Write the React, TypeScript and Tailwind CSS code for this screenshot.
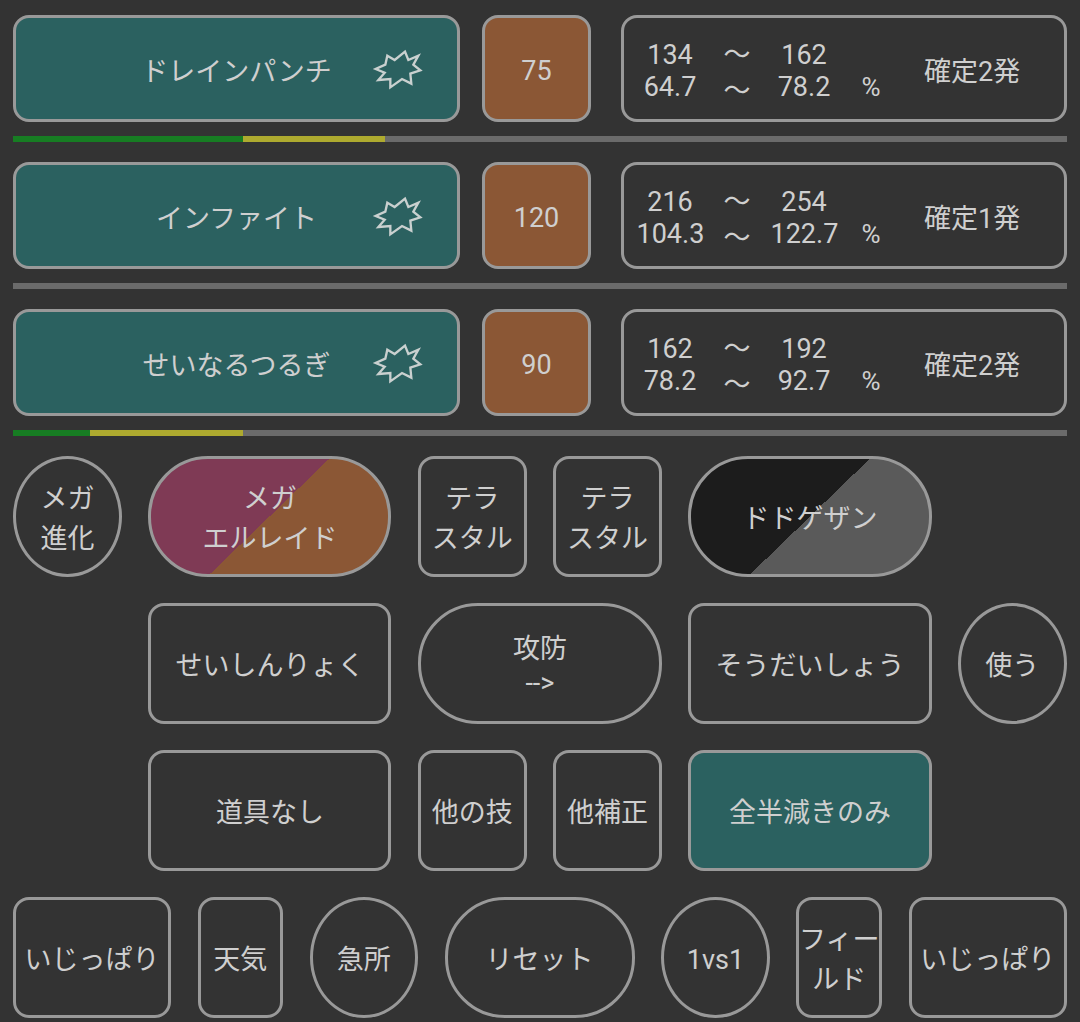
import type { ReactNode } from "react";

const FONT = "font-['Roboto','Noto_Sans_CJK_JP',sans-serif]";

const Burst = () => (
  <svg
    viewBox="0 0 240 210"
    className="absolute left-[344px] top-[17px] h-[70px] w-[80px]"
    fill="none"
    stroke="#c9d0cf"
    strokeWidth="7"
  >
    <path d="M82 62 L104 75 L135 50 L145 75 L175 62 L160 89 L181 106 L151 116 L154 146 L126 132 L91 157 L91 132 L55 135 L74 113 L47 102 L76 89 Z" />
  </svg>
);

const Btn = ({
  w,
  cls = "rounded-[16px]",
  children,
}: {
  w: string;
  cls?: string;
  children: ReactNode;
}) => (
  <div
    className={`relative flex h-[121px] shrink-0 items-center justify-center whitespace-nowrap border-[3px] border-[#999999] pt-[4px] text-center text-[27px] leading-[40px] text-[#cfcfcf] ${w} ${cls}`}
  >
    <div>{children}</div>
  </div>
);

const Move = ({
  name,
  power,
  lo,
  hi,
  loPct,
  hiPct,
  ko,
}: {
  name: string;
  power: string;
  lo: string;
  hi: string;
  loPct: string;
  hiPct: string;
  ko: string;
}) => (
  <div className="flex h-[107px] gap-[22px] text-[27px] text-[#cfcfcf]">
    <div className="relative flex w-[447px] items-center justify-center rounded-[16px] border-[3px] border-[#999999] bg-[#2b6160] pt-[8px]">
      {name}
      <Burst />
    </div>
    <div className="flex w-[109px] items-center justify-center rounded-[16px] border-[3px] border-[#999999] bg-[#8b5735] pt-[6px]">
      {power}
    </div>
    <div className="ml-[8px] flex w-[446px] items-center rounded-[16px] border-[3px] border-[#999999] pl-[12.5px]">
      <div className="grid w-[268px] grid-cols-4 items-center whitespace-nowrap pt-[4px] text-center leading-[32px]">
        <span>{lo}</span>
        <span>〜</span>
        <span>{hi}</span>
        <span />
        <span>{loPct}</span>
        <span className="pt-[8px] leading-[24px]">〜</span>
        <span>{hiPct}</span>
        <span className="text-[26px]">%</span>
      </div>
      <div className="ml-[19.5px] pt-[8px]">{ko}</div>
    </div>
  </div>
);

const Bar = ({ green, yellow }: { green: string; yellow: string }) => (
  <div className="mb-[20px] mt-[14px] flex h-[6px] bg-[#6b6b6b]">
    <div className={`h-full bg-[#177d23] ${green}`} />
    <div className={`h-full bg-[#aeaa2f] ${yellow}`} />
  </div>
);

export default function App() {
  return (
    <div
      className={`h-[1022px] w-[1080px] overflow-hidden bg-[#333333] pl-[13px] pr-[13px] pt-[15px] ${FONT}`}
    >
      <Move name="ドレインパンチ" power="75" lo="134" hi="162" loPct="64.7" hiPct="78.2" ko="確定2発" />
      <Bar green="w-[230px]" yellow="w-[142px]" />
      <Move name="インファイト" power="120" lo="216" hi="254" loPct="104.3" hiPct="122.7" ko="確定1発" />
      <Bar green="w-0" yellow="w-0" />
      <Move name="せいなるつるぎ" power="90" lo="162" hi="192" loPct="78.2" hiPct="92.7" ko="確定2発" />
      <Bar green="w-[77px]" yellow="w-[153px]" />

      <div className="flex gap-[26.3px]">
        <Btn w="w-[109px]" cls="rounded-[50%]">
          メガ
          <br />
          進化
        </Btn>
        <Btn
          w="w-[243.2px]"
          cls="rounded-[60px] bg-origin-border bg-[linear-gradient(136deg,#7f3a55_50%,#8b5735_50%)]"
        >
          メガ
          <br />
          エルレイド
        </Btn>
        <Btn w="w-[109px]">
          テラ
          <br />
          スタル
        </Btn>
        <Btn w="w-[109px]">
          テラ
          <br />
          スタル
        </Btn>
        <Btn
          w="w-[243.2px]"
          cls="rounded-[60px] bg-origin-border bg-[linear-gradient(136deg,#1c1c1c_50%,#5a5a5a_50%)]"
        >
          ドドゲザン
        </Btn>
      </div>

      <div className="mt-[26px] flex gap-[26.3px] pl-[135.3px]">
        <Btn w="w-[243.2px]">せいしんりょく</Btn>
        <Btn w="w-[244.3px]" cls="rounded-[60px]">
          <div className="leading-[34px]">
            攻防
            <br />
            --&gt;
          </div>
        </Btn>
        <Btn w="w-[243.2px]">そうだいしょう</Btn>
        <Btn w="w-[109px]" cls="rounded-[50%]">
          使う
        </Btn>
      </div>

      <div className="mt-[26px] flex gap-[26.3px] pl-[135.3px]">
        <Btn w="w-[243.2px]">道具なし</Btn>
        <Btn w="w-[109px]">他の技</Btn>
        <Btn w="w-[109px]">他補正</Btn>
        <Btn w="w-[243.2px]" cls="rounded-[16px] bg-[#2b6160]">
          全半減きのみ
        </Btn>
      </div>

      <div className="mt-[26px] flex gap-[26.6px]">
        <Btn w="w-[158px]">いじっぱり</Btn>
        <Btn w="w-[85.4px]">天気</Btn>
        <Btn w="w-[108.4px]" cls="rounded-[50%]">
          急所
        </Btn>
        <Btn w="w-[190px]" cls="rounded-[60px]">
          リセット
        </Btn>
        <Btn w="w-[108.6px]" cls="rounded-[50%]">
          1vs1
        </Btn>
        <Btn w="w-[85.8px]">
          フィー
          <br />
          ルド
        </Btn>
        <Btn w="w-[158.2px]">いじっぱり</Btn>
      </div>
    </div>
  );
}
